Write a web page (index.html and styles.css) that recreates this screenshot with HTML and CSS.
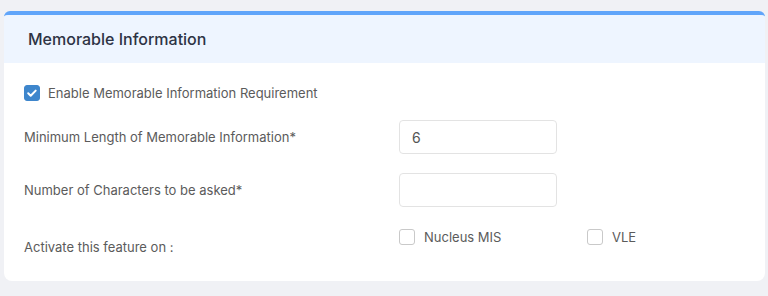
FILE: index.html
```html
<!DOCTYPE html>
<html lang="en">
<head>
  <meta charset="UTF-8">
  <title>Memorable Information</title>
  <link rel="stylesheet" href="styles.css">
</head>
<body>

<section class="card">
  <div class="card-header">
    <h2>Memorable Information</h2>
  </div>
  <div class="card-body">
    <label class="check">
      <span class="box checked">
        <svg viewBox="0 0 16 16" width="16" height="16"><path d="M4.2 8.3l2.5 2.5 5-5.2" fill="none" stroke="#fff" stroke-width="2" stroke-linecap="round" stroke-linejoin="round"/></svg>
      </span>
      Enable Memorable Information Requirement
    </label>

    <div class="form-row">
      <label class="field-label">Minimum Length of Memorable Information*</label>
      <input type="text" class="field" value="6">
    </div>

    <div class="form-row">
      <label class="field-label">Number of Characters to be asked*</label>
      <input type="text" class="field" value="">
    </div>

    <div class="form-row options-row">
      <label class="field-label">Activate this feature on :</label>
      <div class="options">
        <label class="check option"><span class="box"></span>Nucleus MIS</label>
        <label class="check option"><span class="box"></span>VLE</label>
      </div>
    </div>
  </div>
</section>

</body>
</html>
```

FILE: styles.css
```css
* {
  box-sizing: border-box;
  margin: 0;
  padding: 0;
}

body {
  background-color: #f0f1f5;
  font-family: 'Inter', 'Noto Sans', sans-serif;
  padding: 11px 3px 0 4px;
}

.card {
  background-color: #fff;
  border-top: 4px solid #60a5fa;
  border-radius: 6px 6px 8px 8px;
  overflow: hidden;
  height: 270px;
}

.card-header {
  background-color: #eef5ff;
  height: 48px;
  padding: 0 24px;
  display: flex;
  align-items: center;
}

.card-header h2 {
  font-size: 16px;
  font-weight: 500;
  color: #2d3344;
}

.card-body {
  padding: 22px 20px 0 20px;
  font-size: 13px;
  color: #5b5b5b;
}

.check {
  display: flex;
  align-items: center;
  gap: 8px;
  color: #5b5b5b;
}

.box {
  width: 16px;
  height: 16px;
  border: 1px solid #c9c9c9;
  border-radius: 3px;
  background-color: #fff;
  display: inline-flex;
  flex-shrink: 0;
}

.box.checked {
  background-color: #3e86cc;
  border-color: #3e86cc;
}

.box.checked svg {
  margin: -1px;
}

.form-row {
  display: grid;
  grid-template-columns: 375px 1fr;
  align-items: center;
  margin-top: 19px;
}

.field {
  width: 158px;
  height: 34px;
  border: 1px solid #e3e3e3;
  border-radius: 4px;
  padding: 0 12px;
  font-family: inherit;
  font-size: 14px;
  color: #555;
  outline: none;
}

.options-row {
  align-items: start;
  margin-top: 22px;
}

.options-row .field-label {
  margin-top: 10px;
}

.options {
  display: flex;
}

.option {
  width: 188px;
  gap: 9px;
}
```
